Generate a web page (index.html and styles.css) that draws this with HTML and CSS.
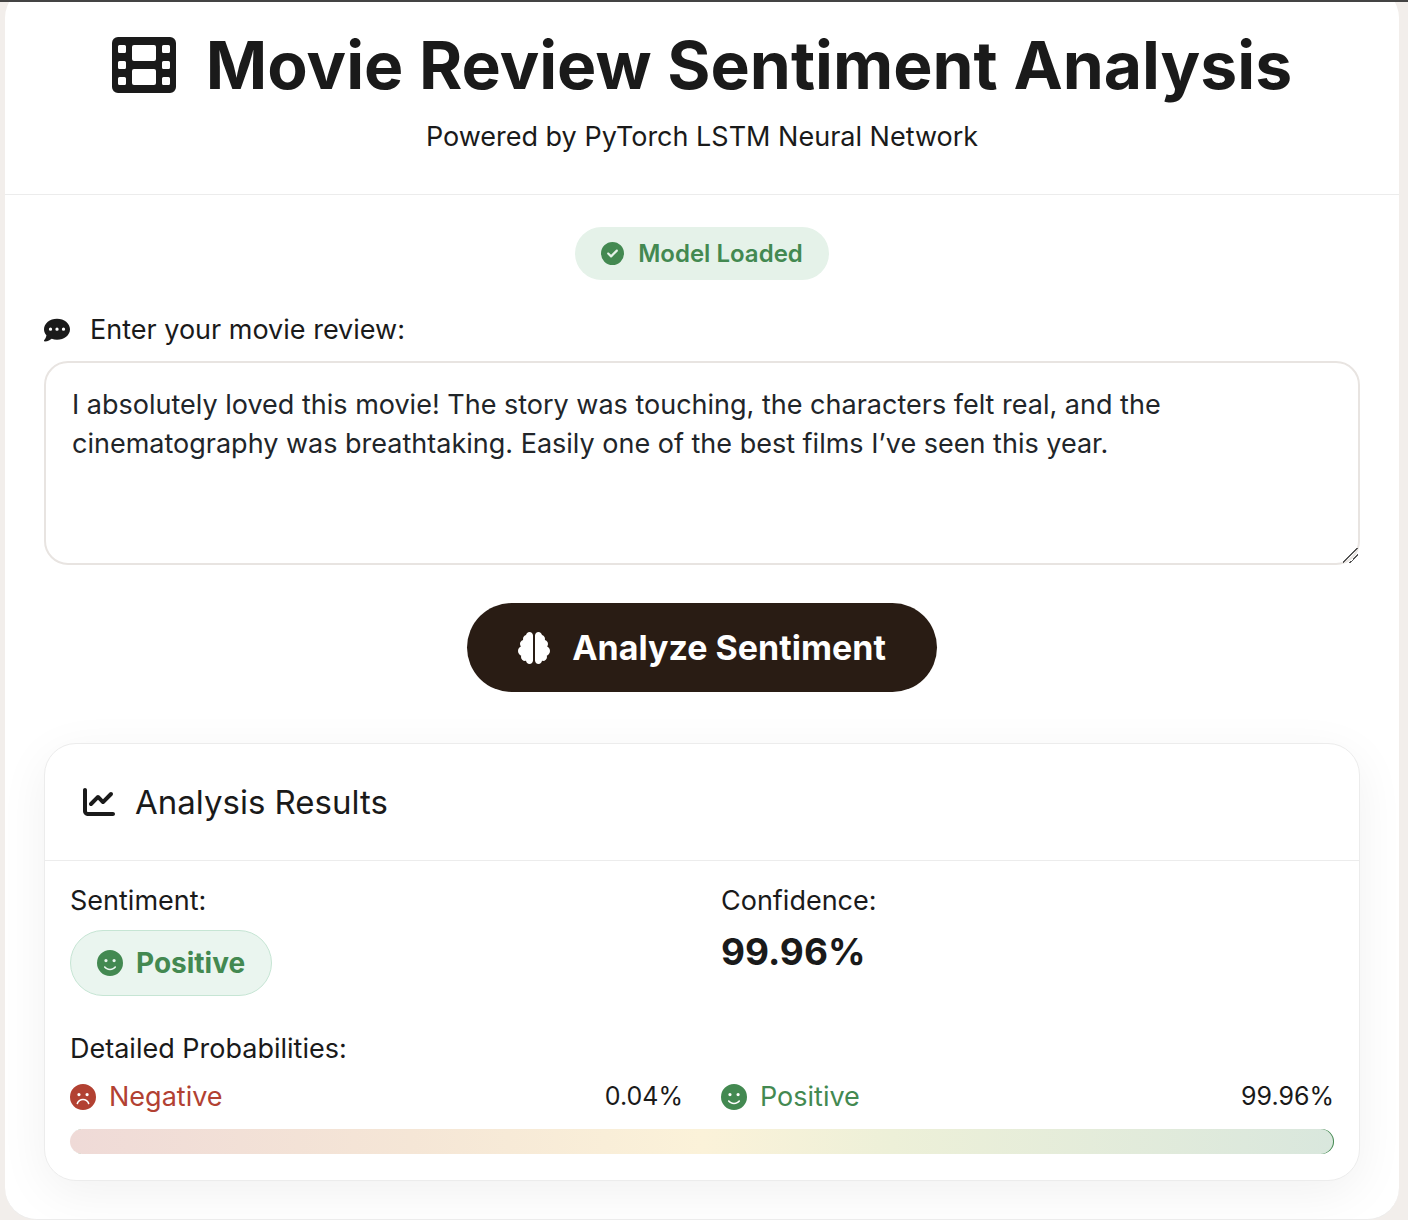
FILE: index.html
```html
<!doctype html>
<html lang="en">
  <head>
    <meta charset="utf-8" />
    <meta name="viewport" content="width=device-width, initial-scale=1" />
    <title>Movie Review Sentiment Analysis</title>
    <link rel="stylesheet" href="styles.css">
  </head>
  <body>
    <!-- Shared icon shapes -->
    <svg class="icon-defs" aria-hidden="true">
      <symbol id="icon-smile" viewBox="0 0 512 512">
        <path d="M256 512A256 256 0 1 0 256 0a256 256 0 1 0 0 512zM164.100 325.500C182 346.200 212.600 368 256 368s74-21.800 91.900-42.500c5.800-6.700 15.900-7.400 22.600-1.600s7.400 15.900 1.600 22.600C349.800 372.100 311.100 400 256 400s-93.800-27.900-116.100-53.500c-5.800-6.700-5.100-16.800 1.600-22.600s16.800-5.100 22.600 1.600zM144.400 208a32 32 0 1 1 64 0 32 32 0 1 1 -64 0zm192-32a32 32 0 1 1 0 64 32 32 0 1 1 0-64z" />
      </symbol>
    </svg>

    <div class="top-edge"></div>

    <main class="card">
      <header class="header">
        <h1>
          <svg class="icon icon-title" viewBox="0 0 64 64" aria-hidden="true">
            <path fill-rule="evenodd" d="M6 4H58a6 6 0 0 1 6 6V54a6 6 0 0 1-6 6H6a6 6 0 0 1-6-6V10a6 6 0 0 1 6-6zM7.500 12a1.500 1.500 0 0 0-1.500 1.500v5a1.500 1.500 0 0 0 1.500 1.500h5a1.500 1.500 0 0 0 1.500-1.500v-5a1.500 1.500 0 0 0-1.500-1.500zM7.500 28a1.500 1.500 0 0 0-1.500 1.500v5a1.500 1.500 0 0 0 1.500 1.500h5a1.500 1.500 0 0 0 1.500-1.500v-5a1.500 1.500 0 0 0-1.500-1.500zM7.500 44a1.500 1.500 0 0 0-1.500 1.500v5a1.500 1.500 0 0 0 1.500 1.500h5a1.500 1.500 0 0 0 1.500-1.500v-5a1.500 1.500 0 0 0-1.500-1.500zM51.500 12a1.500 1.500 0 0 0-1.500 1.500v5a1.500 1.500 0 0 0 1.500 1.500h5a1.500 1.500 0 0 0 1.500-1.500v-5a1.500 1.500 0 0 0-1.500-1.500zM51.500 28a1.500 1.500 0 0 0-1.500 1.500v5a1.500 1.500 0 0 0 1.500 1.500h5a1.500 1.500 0 0 0 1.500-1.500v-5a1.500 1.500 0 0 0-1.500-1.500zM51.500 44a1.500 1.500 0 0 0-1.500 1.500v5a1.500 1.500 0 0 0 1.500 1.500h5a1.500 1.500 0 0 0 1.500-1.500v-5a1.500 1.500 0 0 0-1.500-1.500zM22 12a2 2 0 0 0-2 2v12a2 2 0 0 0 2 2H42a2 2 0 0 0 2-2V14a2 2 0 0 0-2-2zM22 36a2 2 0 0 0-2 2v12a2 2 0 0 0 2 2H42a2 2 0 0 0 2-2V38a2 2 0 0 0-2-2z" />
          </svg>
          Movie Review Sentiment Analysis
        </h1>
        <p>Powered by PyTorch LSTM Neural Network</p>
      </header>

      <div class="content">
        <div class="status">
          <svg class="icon icon-status" viewBox="0 0 512 512" aria-hidden="true">
            <path d="M256 512A256 256 0 1 0 256 0a256 256 0 1 0 0 512zM369 209L241 337c-9.400 9.400-24.600 9.400-33.900 0l-64-64c-9.400-9.400-9.400-24.600 0-33.900s24.600-9.400 33.900 0l47 47L335 175c9.400-9.400 24.600-9.400 33.900 0s9.400 24.600 0 33.900z" />
          </svg>
          Model Loaded
        </div>

        <form class="review-form">
          <label for="review">
            <svg class="icon" viewBox="0 0 512 512" aria-hidden="true">
              <path d="M256 448c141.400 0 256-93.100 256-208S397.400 32 256 32S0 125.100 0 240c0 45.100 17.700 86.800 47.700 120.900c-1.900 24.500-11.400 46.300-21.400 62.900c-5.500 9.200-11.100 16.600-15.200 21.600c-2.100 2.500-3.700 4.400-4.900 5.700c-.6 .6-1 1.100-1.300 1.400l-.3 .3c-4.600 4.600-5.900 11.400-3.400 17.400c2.500 6 8.300 9.900 14.800 9.900c28.700 0 57.600-8.900 81.600-19.300c22.900-10 42.400-21.900 54.300-30.600c31.800 11.500 67 17.900 104.100 17.900zM128 208a32 32 0 1 1 0 64 32 32 0 1 1 0-64zm128 0a32 32 0 1 1 0 64 32 32 0 1 1 0-64zm96 32a32 32 0 1 1 64 0 32 32 0 1 1 -64 0z" />
            </svg>
            Enter your movie review:
          </label>
          <textarea id="review" rows="4">I absolutely loved this movie! The story was touching, the characters felt real, and the cinematography was breathtaking. Easily one of the best films I’ve seen this year.</textarea>
          <button type="button" class="analyze">
            <svg class="icon icon-large" viewBox="0 0 512 512" aria-hidden="true">
              <path d="M184 0c30.900 0 56 25.100 56 56V456c0 30.900-25.100 56-56 56c-28.900 0-52.700-21.900-55.700-50.100c-5.200 1.400-10.700 2.100-16.300 2.100c-35.300 0-64-28.700-64-64c0-7.400 1.300-14.600 3.600-21.200C21.400 367.400 0 338.200 0 304c0-31.900 18.700-59.500 45.800-72.300C37.100 220.800 32 207 32 192c0-30.700 21.600-56.300 50.400-62.600C80.800 123.900 80 118 80 112c0-29.900 20.600-55.100 48.300-62.100C131.300 21.900 155.100 0 184 0zM328 0c28.900 0 52.600 21.900 55.700 49.900c27.800 7 48.300 32.100 48.300 62.100c0 6-.8 11.900-2.400 17.400c28.800 6.200 50.400 31.900 50.400 62.600c0 15-5.100 28.800-13.800 39.700C493.300 244.500 512 272.100 512 304c0 34.200-21.400 63.400-51.600 74.800c2.300 6.600 3.600 13.800 3.600 21.200c0 35.300-28.700 64-64 64c-5.600 0-11.100-.7-16.300-2.100c-3 28.200-26.800 50.100-55.700 50.100c-30.900 0-56-25.100-56-56V56c0-30.900 25.100-56 56-56z" />
            </svg>
            Analyze Sentiment
          </button>
        </form>

        <section class="results">
          <h2>
            <svg class="icon icon-large" viewBox="0 0 512 512" aria-hidden="true">
              <path d="M64 64c0-17.700-14.300-32-32-32S0 46.300 0 64V400c0 44.200 35.800 80 80 80H480c17.700 0 32-14.300 32-32s-14.300-32-32-32H80c-8.800 0-16-7.200-16-16V64zm406.600 86.600c12.500-12.500 12.500-32.800 0-45.300s-32.800-12.500-45.300 0L320 210.700l-57.400-57.400c-12.500-12.500-32.800-12.500-45.300 0l-112 112c-12.500 12.500-12.500 32.800 0 45.300s32.800 12.500 45.300 0L240 221.300l57.400 57.400c12.500 12.500 32.800 12.500 45.300 0l128-128z" />
            </svg>
            Analysis Results
          </h2>

          <div class="results-body">
            <div class="columns">
              <div>
                <h3>Sentiment:</h3>
                <div class="sentiment">
                  <svg class="icon" aria-hidden="true"><use href="#icon-smile" /></svg>
                  Positive
                </div>
              </div>
              <div>
                <h3>Confidence:</h3>
                <div class="confidence">99.96%</div>
              </div>
            </div>

            <h3>Detailed Probabilities:</h3>
            <div class="columns">
              <div class="probability">
                <span class="probability-label negative">
                  <svg class="icon" viewBox="0 0 512 512" aria-hidden="true">
                    <path d="M256 512A256 256 0 1 0 256 0a256 256 0 1 0 0 512zM159.300 388.700c-2.600 8.400-11.600 13.200-20 10.500s-13.200-11.600-10.500-20C145.200 326.100 196.300 288 256 288s110.800 38.100 127.300 91.300c2.600 8.400-2.100 17.400-10.500 20s-17.400-2.100-20-10.500C340.500 349.400 302.100 320 256 320s-84.500 29.400-96.700 68.700zM144.400 208a32 32 0 1 1 64 0 32 32 0 1 1 -64 0zm192-32a32 32 0 1 1 0 64 32 32 0 1 1 0-64z" />
                  </svg>
                  Negative
                </span>
                <span class="probability-value">0.04%</span>
              </div>
              <div class="probability">
                <span class="probability-label positive">
                  <svg class="icon" aria-hidden="true"><use href="#icon-smile" /></svg>
                  Positive
                </span>
                <span class="probability-value">99.96%</span>
              </div>
            </div>
            <div class="probability-bar"></div>
          </div>
        </section>
      </div>
    </main>
  </body>
</html>
```

FILE: styles.css
```css
* {
  box-sizing: border-box;
}

body {
  margin: 0;
  background: #f2eeeb;
  color: #1a1a1a;
  font-family: Inter, 'Liberation Sans', sans-serif;
  font-size: 27px;
  line-height: 39px;
}

h1,
h2,
h3,
p {
  margin: 0;
  font-weight: 400;
}

h3 {
  font-size: 27px;
}

.icon-defs {
  display: none;
}

.icon {
  width: 26px;
  height: 26px;
  flex: none;
  fill: currentColor;
}

.icon-title {
  width: 64px;
  height: 64px;
}

.icon-status {
  width: 23px;
  height: 23px;
}

.icon-large {
  width: 32px;
  height: 32px;
}

.top-edge {
  position: relative;
  z-index: 1;
  height: 2px;
  background: #444;
}

/* The card starts above the top edge of the page */
.card {
  margin: -16px 9px 0 5px;
  background: #fff;
  border-bottom: 1px solid #ececec;
  border-radius: 32px;
  overflow: hidden;
}

.header {
  padding: 39px 38px 38px;
  border-bottom: 1px solid #ececec;
  text-align: center;
}

.header h1 {
  display: flex;
  align-items: center;
  justify-content: center;
  gap: 30px;
  font-size: 66px;
  font-weight: 700;
  line-height: 80px;
}

.header p {
  margin-top: 12px;
}

.content {
  display: flex;
  flex-direction: column;
  padding: 32px 39px 38px;
}

.status {
  display: flex;
  align-items: center;
  align-self: center;
  gap: 14px;
  padding: 7px 26px;
  border-radius: 32px;
  background: #e5f2e9;
  color: #438951;
  font-size: 24px;
  font-weight: 600;
}

.review-form {
  display: flex;
  flex-direction: column;
  margin-top: 30px;
}

.review-form label {
  display: flex;
  align-items: center;
  gap: 20px;
}

.review-form textarea {
  width: 100%;
  margin-top: 12px;
  padding: 22px 26px;
  border: 2px solid #e8e4e1;
  border-radius: 24px;
  background: #fff;
  color: #212529;
  font: inherit;
  resize: vertical;
}

.review-form textarea::-webkit-scrollbar {
  width: 17px;
  height: 17px;
}

.review-form textarea::-webkit-resizer {
  background: linear-gradient(
    135deg,
    transparent 46%,
    #555 46% 52%,
    transparent 52% 70%,
    #555 70% 76%,
    transparent 76%
  );
}

.analyze {
  display: flex;
  align-items: center;
  align-self: center;
  gap: 22px;
  margin-top: 38px;
  padding: 20px 51px;
  border: none;
  border-radius: 48px;
  background: #291c14;
  color: #fff;
  font-family: inherit;
  font-size: 34px;
  font-weight: 700;
  line-height: 49px;
  cursor: pointer;
}

.results {
  margin-top: 51px;
  border: 1px solid #ececec;
  border-radius: 32px;
  background: #fff;
  box-shadow: 0 12px 50px rgba(0, 0, 0, 0.06);
}

.results h2 {
  display: flex;
  align-items: center;
  gap: 20px;
  padding: 38px;
  border-bottom: 1px solid #ececec;
  font-size: 33px;
  line-height: 40px;
}

.results-body {
  padding: 20px 25px 26px;
}

.columns {
  display: grid;
  grid-template-columns: 1fr 1fr;
  gap: 38px;
}

.sentiment {
  display: inline-flex;
  align-items: center;
  gap: 13px;
  margin: 10px 0 33px;
  padding: 13px 26px;
  border: 1px solid #c6e5d4;
  border-radius: 33px;
  background: #eaf5ef;
  color: #438951;
  font-size: 28px;
  font-weight: 700;
  line-height: 38px;
}

.confidence {
  margin-top: 9px;
  font-size: 37px;
  font-weight: 700;
  line-height: 46px;
}

.probability {
  display: flex;
  justify-content: space-between;
  margin-top: 9px;
}

.probability-label {
  display: flex;
  align-items: center;
  gap: 13px;
}

.probability-value {
  font-size: 25px;
}

.negative {
  color: #b24132;
}

.positive {
  color: #438951;
}

.probability-bar {
  height: 25px;
  margin-top: 13px;
  border-radius: 13px;
  background: linear-gradient(90deg, #efdad7, #f5e6d6 27%, #fbf2d9 50%, #edf0d8 65%, #d9e7dd);
  box-shadow: inset -1px 0 #438951;
}
```
